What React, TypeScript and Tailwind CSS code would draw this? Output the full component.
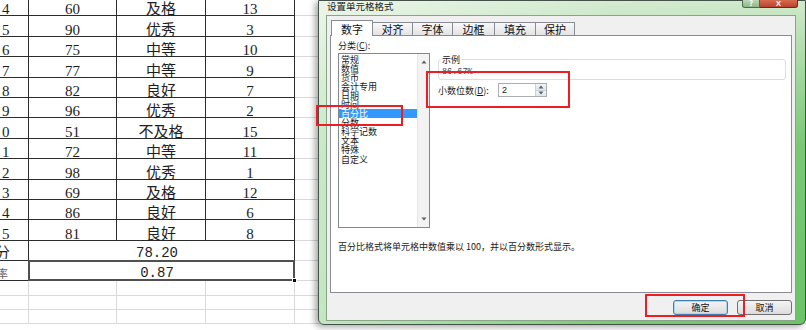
import React from 'react';

const rows: [string, string, string, string][] = [
  ['14', '60', '及格', '13'],
  ['15', '90', '优秀', '3'],
  ['16', '75', '中等', '10'],
  ['17', '77', '中等', '9'],
  ['18', '82', '良好', '7'],
  ['19', '96', '优秀', '2'],
  ['20', '51', '不及格', '15'],
  ['21', '72', '中等', '11'],
  ['22', '98', '优秀', '1'],
  ['23', '69', '及格', '12'],
  ['24', '86', '良好', '6'],
  ['25', '81', '良好', '8'],
];

const cats = ['常规', '数值', '货币', '会计专用', '日期', '时间', '百分比', '分数', '科学记数', '文本', '特殊', '自定义'];

const tabs: [string, string][] = [
  ['对齐', 'w-[40px]'],
  ['字体', 'w-[40px]'],
  ['边框', 'w-[42px]'],
  ['填充', 'w-[41px]'],
  ['保护', 'w-[39px]'],
];

// the first column is scrolled off to the left; only the tail of each value shows
function NumCell({ text }: { text: string }) {
  return (
    <div className="w-[29px] shrink-0 border-r border-b border-[#2b2b2b] flex items-end pl-[2px] text-[15px] leading-[12px] font-['Liberation_Serif',serif]">
      {text.slice(-1)}
    </div>
  );
}

function LabelCell({ text, small }: { text: string; small?: boolean }) {
  return (
    <div className="w-[29px] shrink-0 border-r border-b border-[#2b2b2b] flex items-end pb-[1px]">
      <div className="w-[10px] overflow-hidden whitespace-nowrap">
        {small ? (
          <span className="block -ml-[3px] text-[11px] leading-[12px] text-[#666]">{text.slice(-1)}</span>
        ) : (
          <span className="block -ml-[5px] text-[15px] leading-[14px]">{text.slice(-1)}</span>
        )}
      </div>
    </div>
  );
}

function DataRow({ row }: { row: [string, string, string, string] }) {
  const [n, score, grade, rank] = row;
  return (
    <div className="flex h-[20.4px] shrink-0">
      <NumCell text={n} />
      <div className="w-[88px] shrink-0 border-r border-b border-[#2b2b2b] flex items-end justify-center text-[15px] leading-[12px] font-['Liberation_Serif',serif]">
        {score}
      </div>
      <div className="w-[89px] shrink-0 border-r border-b border-[#2b2b2b] flex items-end justify-center pb-[1px] text-[15px] leading-[12px]">
        {grade}
      </div>
      <div className="w-[89px] shrink-0 border-r border-b border-[#2b2b2b] flex items-end justify-center text-[15px] leading-[12px] font-['Liberation_Serif',serif]">
        {rank}
      </div>
      <div className="flex-1 border-b border-[#d9d9d9]" />
    </div>
  );
}

function MergedRow({ label, value, selected }: { label: string; value: string; selected?: boolean }) {
  return (
    <div className="flex h-[20.4px] shrink-0">
      <LabelCell text={label} small={selected} />
      <div className="relative w-[266px] shrink-0 border-r border-b border-[#2b2b2b] flex items-end justify-center pr-[9px] pb-[1px] text-[14px] leading-[12px] font-['Liberation_Mono',monospace]">
        {value}
        {selected && (
          <>
            <div className="absolute -left-[1px] -top-[1px] -right-[1px] -bottom-[1px] border-2 border-[#505050]" />
            <div className="absolute -right-[3px] -bottom-[3px] w-[5px] h-[5px] bg-black border border-white" />
          </>
        )}
      </div>
      <div className="flex-1 border-b border-[#d9d9d9]" />
    </div>
  );
}

function EmptyRow() {
  return (
    <div className="flex h-[14.3px] shrink-0">
      <div className="w-[29px] shrink-0 border-r border-b border-[#dadada]" />
      <div className="w-[88px] shrink-0 border-r border-b border-[#dadada]" />
      <div className="w-[89px] shrink-0 border-r border-b border-[#dadada]" />
      <div className="w-[89px] shrink-0 border-r border-b border-[#dadada]" />
      <div className="flex-1 border-b border-[#dadada]" />
    </div>
  );
}

function Sheet() {
  return (
    <div className="flex flex-col -mt-[4px] text-[#1e1e1e]">
      {rows.map((r) => (
        <DataRow key={r[0]} row={r} />
      ))}
      <MergedRow label="平均分" value="78.20" />
      <MergedRow label="及格率" value="0.87" selected />
      <EmptyRow />
      <EmptyRow />
      <EmptyRow />
    </div>
  );
}

function Arrow({ up }: { up?: boolean }) {
  return (
    <svg width="6" height="4" viewBox="0 0 6 4">
      <polygon points={up ? '3,0.5 5.5,3.5 0.5,3.5' : '0.5,0.5 5.5,0.5 3,3.5'} fill="#606060" />
    </svg>
  );
}

function Dialog() {
  return (
    <div className="absolute left-[318px] top-0 w-[488px] h-[325px] flex flex-col border border-[#45524a] rounded-b-[6px] pl-[7px] pr-[9px] pb-[3px] shadow-[-3px_2px_6px_rgba(0,0,0,0.35)] bg-[linear-gradient(90deg,rgba(255,255,255,0.6),rgba(255,255,255,0.1)_60%,rgba(255,255,255,0)),linear-gradient(180deg,#cfe9cb_0%,#a3d89e_22%,#78c874_45%,#6bc367_100%)]">
      <div className="h-[14px] flex justify-between items-start">
        <span className="text-[9.5px] leading-[10px] text-[#1b1b1b] pl-[1px]">设置单元格格式</span>
        <div className="flex -mr-[2px] -mt-[1px]">
          <div className="w-[18px] h-[8px] rounded-bl-[3px] border border-t-0 border-[#4d6a4d] bg-[linear-gradient(#b9d6b6,#8fb98b)] flex items-end justify-center text-[8px] leading-[8px] text-white font-bold">
            ?
          </div>
          <div className="w-[38px] h-[8px] rounded-br-[3px] border border-t-0 border-l-0 border-[#6b2a1c] bg-[linear-gradient(#d86a50,#b8432c)] flex items-end justify-center text-[8px] leading-[7px] text-white font-bold font-['Liberation_Sans',sans-serif]">
            X
          </div>
        </div>
      </div>
      <div className="flex-1 bg-[#f0f0f0] border border-[#8aa488] pl-[3px] pr-[3px] pt-[4px] flex flex-col">
        <div className="relative z-10 flex items-end h-[16px] -mb-[1px] ml-[1px]">
          <div className="w-[42px] h-[16px] bg-white border border-b-0 border-[#898c95] flex items-center justify-center text-[11px] leading-[12px] text-[#111]">
            数字
          </div>
          {tabs.map(([t, w]) => (
            <div
              key={t}
              className={`${w} h-[13px] mb-[1px] border-t border-r border-[#898c95] bg-[linear-gradient(#f8f8f8,#e3e3e3)] flex items-center justify-center text-[11px] leading-[12px] text-[#111]`}
            >
              {t}
            </div>
          ))}
        </div>
        <div className="h-[258px] border border-[#898c95] bg-white flex flex-col pl-[7px] text-[#1a1a1a]">
          <div className="flex">
            <div className="w-[92px] flex flex-col">
              <div className="mt-[4px] h-[11px] text-[9px] leading-[11px]">
                分类(<span className="underline">C</span>):
              </div>
              <div className="mt-[2px] h-[175px] border border-[#828790] flex">
                <div className="flex-1 flex flex-col pt-[0.5px]">
                  {cats.map((c) => (
                    <div
                      key={c}
                      className={`h-[9.1px] leading-[9.1px] text-[9px] pl-[2px] whitespace-nowrap ${
                        c === '百分比' ? 'bg-[#3399ff] text-white' : ''
                      }`}
                    >
                      {c}
                    </div>
                  ))}
                </div>
                <div className="w-[12px] bg-[#f3f3f3] border-l border-[#e6e6e6] flex flex-col justify-between items-center py-[6px]">
                  <Arrow up />
                  <Arrow />
                </div>
              </div>
            </div>
            <div className="ml-[8px] w-[348px] flex flex-col">
              <fieldset className="mt-[18px] border border-[#d5dfe5] rounded-[3px] pl-[3px] pb-[2px]">
                <legend className="text-[9px] leading-[11px] px-[1px] -ml-[1px]">示例</legend>
                <div className="pt-[2px] text-[8.5px] leading-[10px] text-[#444] font-['Liberation_Mono',monospace]">
                  86.67%
                </div>
              </fieldset>
              <div className="mt-[3px] flex items-center h-[14px]">
                <div className="w-[60px] text-[9px] leading-[11px] whitespace-nowrap">
                  小数位数(<span className="underline">D</span>):
                </div>
                <div className="w-[49px] h-[14px] border border-[#abadb3] bg-white flex">
                  <div className="flex-1 pl-[3px] text-[9px] leading-[12px] font-['Liberation_Sans',sans-serif]">2</div>
                  <div className="w-[11px] flex flex-col border-l border-[#c9d3de]">
                    <div className="flex-1 bg-[linear-gradient(#f1f5f9,#dde6ee)] flex items-center justify-center border-b border-[#c9d3de]">
                      <Arrow up />
                    </div>
                    <div className="flex-1 bg-[linear-gradient(#f1f5f9,#dde6ee)] flex items-center justify-center">
                      <Arrow />
                    </div>
                  </div>
                </div>
              </div>
            </div>
          </div>
          <div className="mt-[14px] text-[9px] leading-[10px] whitespace-nowrap">
            百分比格式将单元格中数值乘以 100，并以百分数形式显示。
          </div>
        </div>
        <div className="mt-[7px] flex justify-end gap-[9px]">
          <div className="w-[55px] h-[15px] rounded-[3px] border border-[#3c7fb1] bg-[linear-gradient(#f4f4f4,#dcdcdc)] shadow-[inset_0_0_0_1px_#a8d8f0] flex items-center justify-center text-[9px] leading-[10px] text-[#111]">
            确定
          </div>
          <div className="w-[55px] h-[15px] rounded-[3px] border border-[#707070] bg-[linear-gradient(#f4f4f4,#dcdcdc)] flex items-center justify-center text-[9px] leading-[10px] text-[#111]">
            取消
          </div>
        </div>
      </div>
    </div>
  );
}

export default function App() {
  return (
    <div className="relative w-[806px] h-[330px] overflow-hidden bg-white font-['Noto_Sans_CJK_SC',sans-serif]">
      <Sheet />
      <Dialog />
      <div className="absolute left-[316px] top-[105px] w-[87px] h-[21px] border-2 border-[#ee1d24]" />
      <div className="absolute left-[426px] top-[71px] w-[144px] h-[37px] border-2 border-[#ee1d24]" />
      <div className="absolute left-[645px] top-[294px] w-[100px] h-[23px] border-2 border-[#ee1d24]" />
    </div>
  );
}
